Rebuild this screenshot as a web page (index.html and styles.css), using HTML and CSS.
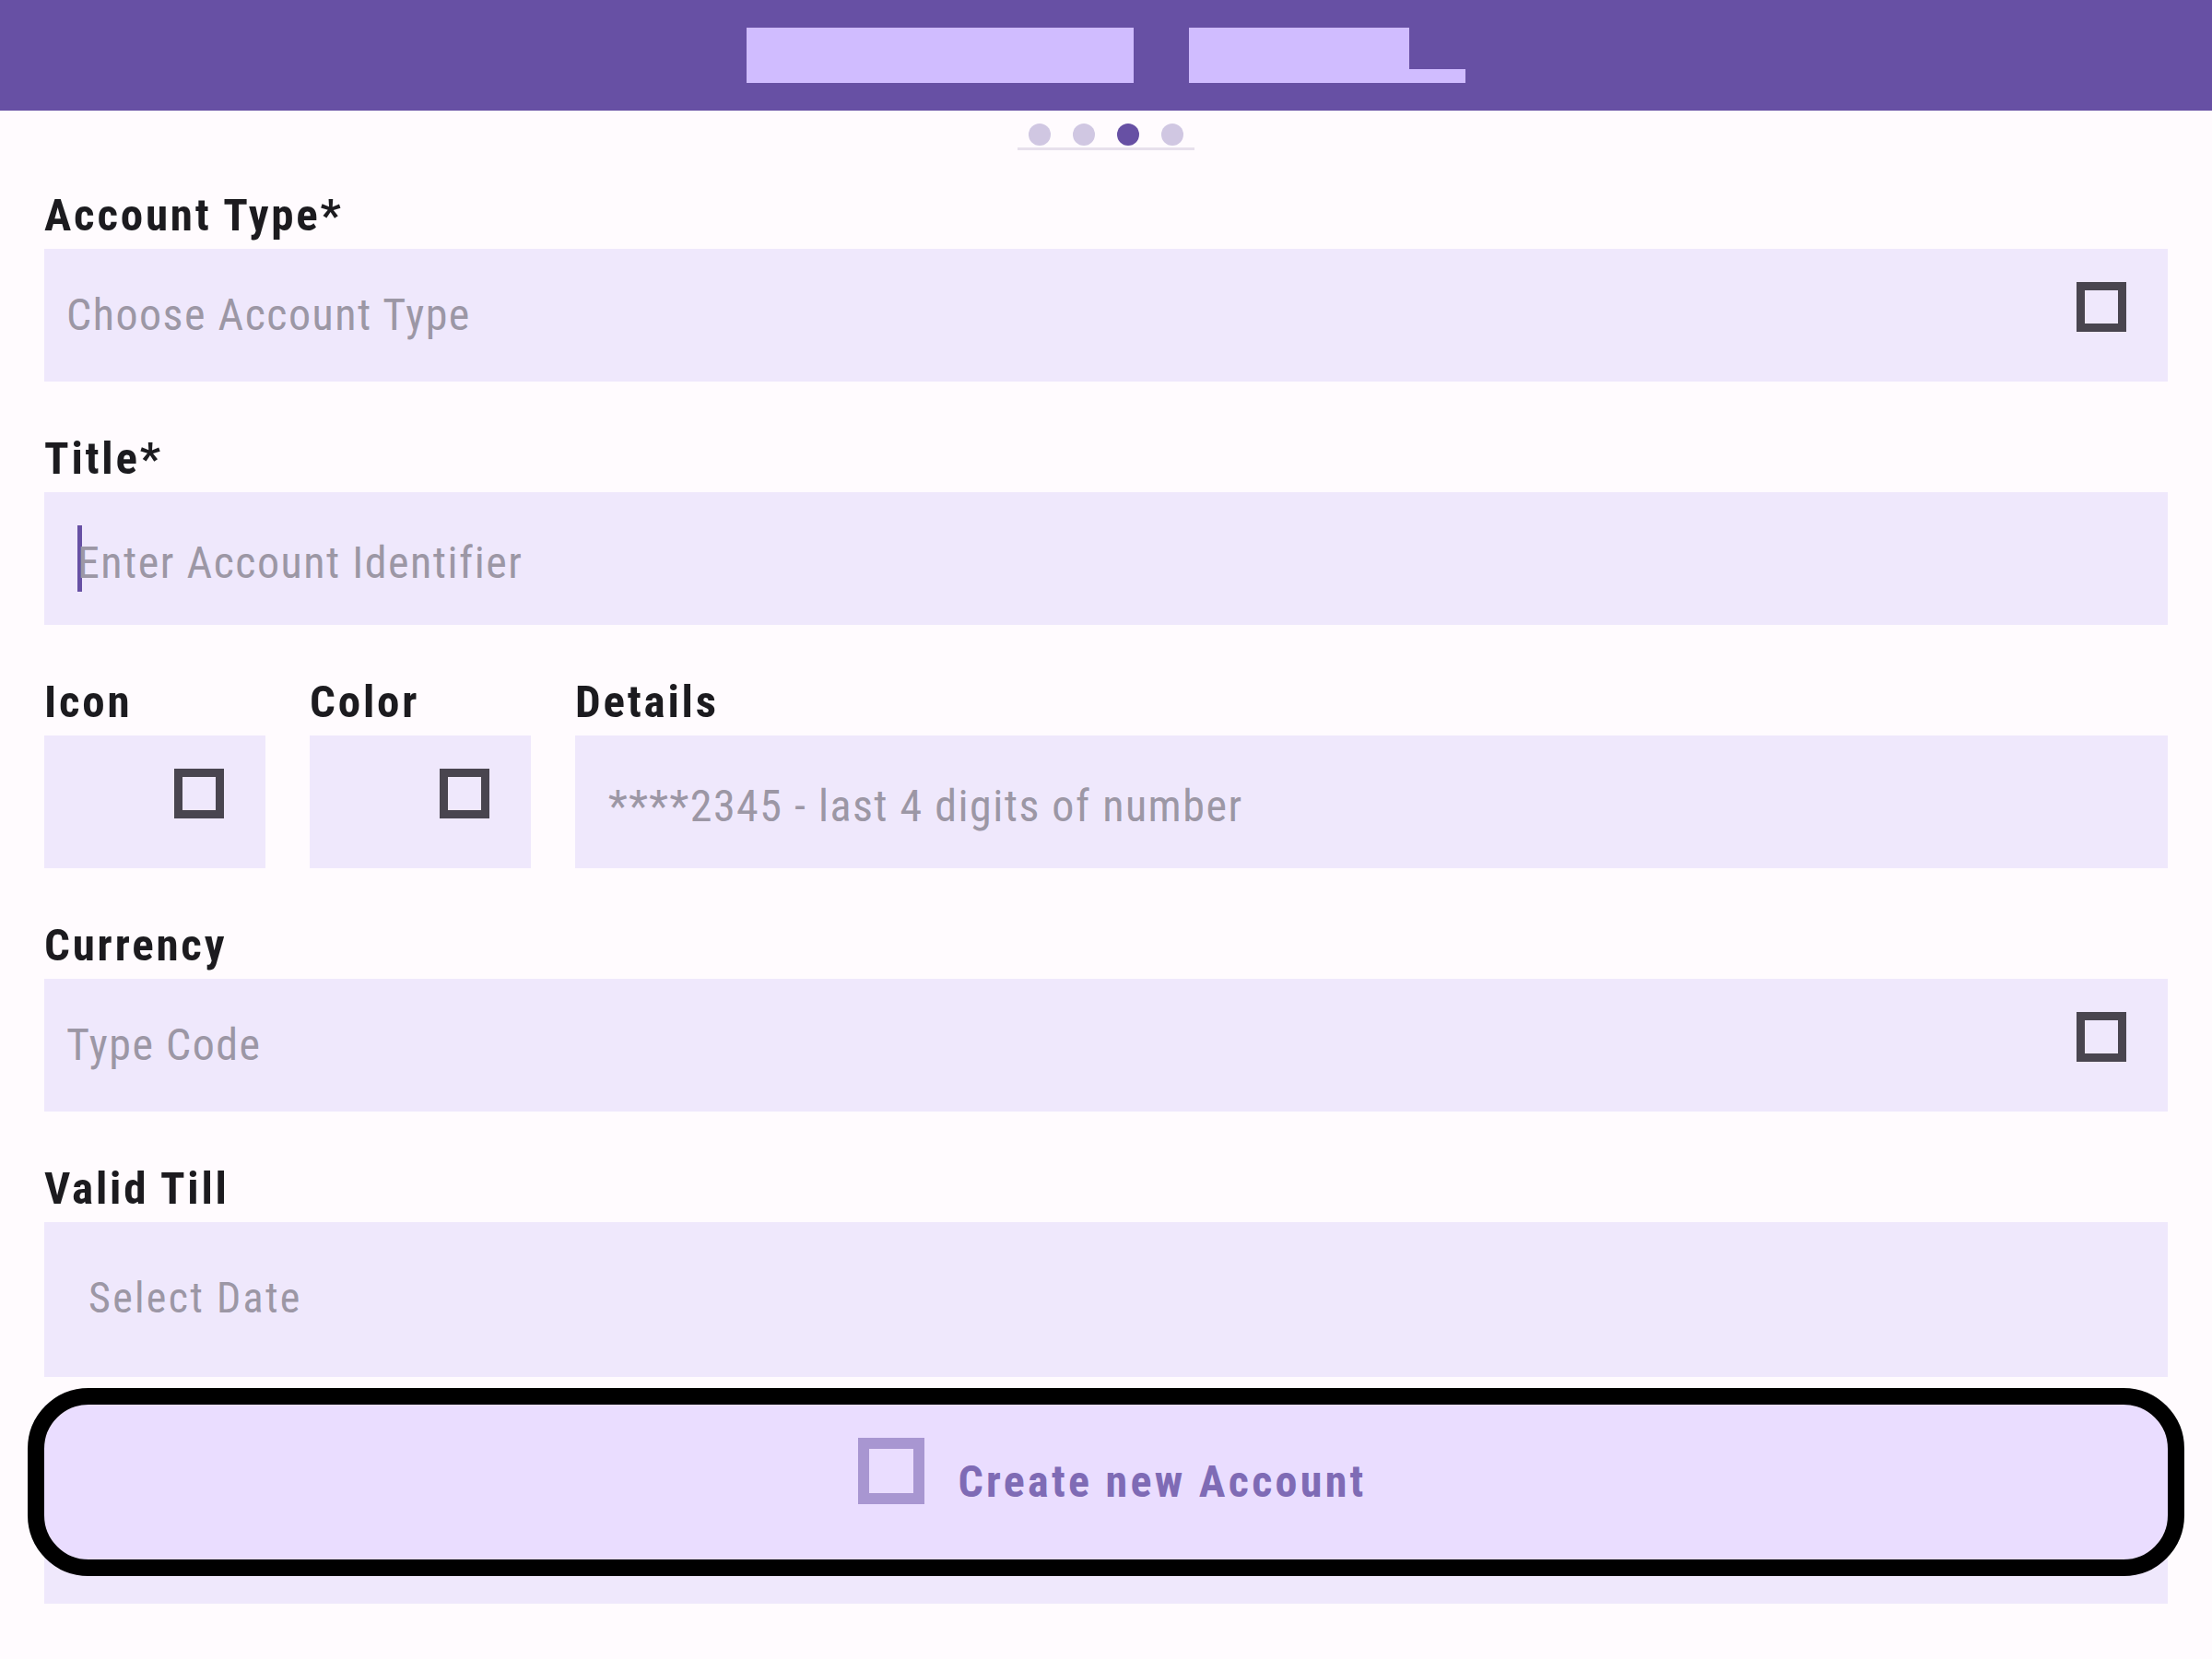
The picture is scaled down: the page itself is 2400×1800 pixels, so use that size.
FILE: index.html
```html
<!DOCTYPE html>
<html lang="en">
<head>
<meta charset="utf-8">
<title>Create Account</title>
<link rel="stylesheet" href="styles.css">
</head>
<body>
<header class="topbar">
  <div class="blk blk-a"></div>
  <div class="blk-group">
    <div class="blk blk-b"></div>
    <div class="blk blk-tail"></div>
  </div>
</header>

<div class="pager">
  <div class="dots">
    <span class="dot"></span>
    <span class="dot"></span>
    <span class="dot active"></span>
    <span class="dot"></span>
  </div>
  <div class="pager-line"></div>
</div>

<main class="form">
  <section class="field">
    <div class="label">Account Type*</div>
    <div class="box select">
      <span class="placeholder">Choose Account Type</span>
      <span class="tofu"></span>
    </div>
  </section>

  <section class="field">
    <div class="label">Title*</div>
    <div class="box textfield">
      <span class="caret"></span>
      <span class="placeholder">Enter Account Identifier</span>
    </div>
  </section>

  <section class="field row">
    <div class="col col-small">
      <div class="label">Icon</div>
      <div class="box picker"><span class="tofu"></span></div>
    </div>
    <div class="col col-small">
      <div class="label">Color</div>
      <div class="box picker"><span class="tofu"></span></div>
    </div>
    <div class="col col-grow">
      <div class="label">Details</div>
      <div class="box textfield">
        <span class="placeholder">****2345 - last 4 digits of number</span>
      </div>
    </div>
  </section>

  <section class="field">
    <div class="label">Currency</div>
    <div class="box select">
      <span class="placeholder">Type Code</span>
      <span class="tofu"></span>
    </div>
  </section>

  <section class="field">
    <div class="label">Valid Till</div>
    <div class="box datefield">
      <span class="placeholder date">Select Date</span>
    </div>
  </section>

  <div class="actions">
    <button class="create-btn" type="button">
      <span class="btn-icon"></span>
      <span class="btn-text">Create new Account</span>
    </button>
  </div>
</main>
</body>
</html>
```

FILE: styles.css
```css
* {
  box-sizing: border-box;
}

html,
body {
  margin: 0;
  padding: 0;
  background: #FFFBFE;
}

body {
  width: 2400px;
  min-height: 1800px;
  font-family: "Roboto Condensed", Roboto, "Noto Sans", sans-serif;
  font-stretch: condensed;
  color: #1C1B1F;
}

/* ---------- top bar ---------- */
.topbar {
  height: 120px;
  background: #6750A4;
  display: flex;
  justify-content: center;
  align-items: flex-start;
  gap: 60px;
  padding-top: 30px;
}

.blk {
  background: #D0BCFF;
}

.blk-a {
  width: 420px;
  height: 60px;
}

.blk-group {
  display: flex;
  align-items: flex-end;
}

.blk-b {
  width: 239px;
  height: 60px;
}

.blk-tail {
  width: 61px;
  height: 15px;
}

/* ---------- pager ---------- */
.pager {
  width: 192px;
  margin: 0 auto;
  padding-top: 14px;
}

.dots {
  display: flex;
  justify-content: center;
  gap: 24px;
  height: 24px;
}

.dot {
  width: 24px;
  height: 24px;
  border-radius: 50%;
  background: #D0C7E2;
}

.dot.active {
  background: #6750A4;
}

.pager-line {
  height: 3px;
  margin-top: 2px;
  background: #E7E0EC;
}

/* ---------- form ---------- */
.form {
  padding: 43px 48px 0;
}

.field {
  margin-top: 56px;
}

.field:first-child {
  margin-top: 0;
}

.row {
  display: flex;
  gap: 48px;
}

.col-small {
  width: 240px;
  flex: none;
}

.col-grow {
  flex: 1;
}

.label {
  font-size: 49px;
  line-height: 56px;
  height: 56px;
  font-weight: 700;
  letter-spacing: 2.8px;
  color: #1C1B1F;
  margin-bottom: 8px;
  white-space: nowrap;
}

.box {
  height: 144px;
  background: #EFE8FC;
  display: flex;
  align-items: center;
}

.placeholder {
  font-size: 48px;
  line-height: 56px;
  letter-spacing: 1.5px;
  color: #9C97A5;
  white-space: nowrap;
}

.select {
  padding: 0 45px 0 24px;
  justify-content: space-between;
}

.tofu {
  width: 54px;
  height: 54px;
  border: 9px solid #49454F;
  flex: none;
  margin-bottom: 18px;
}

.picker {
  justify-content: flex-end;
  padding-right: 45px;
}

.textfield {
  padding-left: 36px;
}

.textfield .placeholder {
  margin-top: 9px;
}

.caret {
  width: 5px;
  height: 72px;
  background: #6750A4;
  margin-right: -5px;
  flex: none;
}

.datefield {
  height: 168px;
  padding-left: 48px;
}

.placeholder.date {
  font-size: 46px;
  letter-spacing: 2.3px;
  margin-bottom: 5px;
}

/* ---------- action ---------- */
.actions {
  margin-top: 30px;
  height: 216px;
  background: #EFE8FC;
}

.create-btn {
  width: 100%;
  height: 168px;
  margin: 0;
  padding: 0 0 0 14px;
  border: 0;
  border-radius: 48px;
  background: #EADDFF;
  outline: 18px solid #000;
  display: flex;
  align-items: center;
  justify-content: center;
  gap: 36px;
  font-family: inherit;
  font-stretch: condensed;
  cursor: pointer;
}

.btn-icon {
  width: 72px;
  height: 72px;
  border: 12px solid #A896D1;
  margin-bottom: 24px;
  flex: none;
}

.btn-text {
  font-size: 48px;
  line-height: 56px;
  font-weight: 700;
  letter-spacing: 3.3px;
  color: #7F6BB5;
  white-space: nowrap;
}
```
